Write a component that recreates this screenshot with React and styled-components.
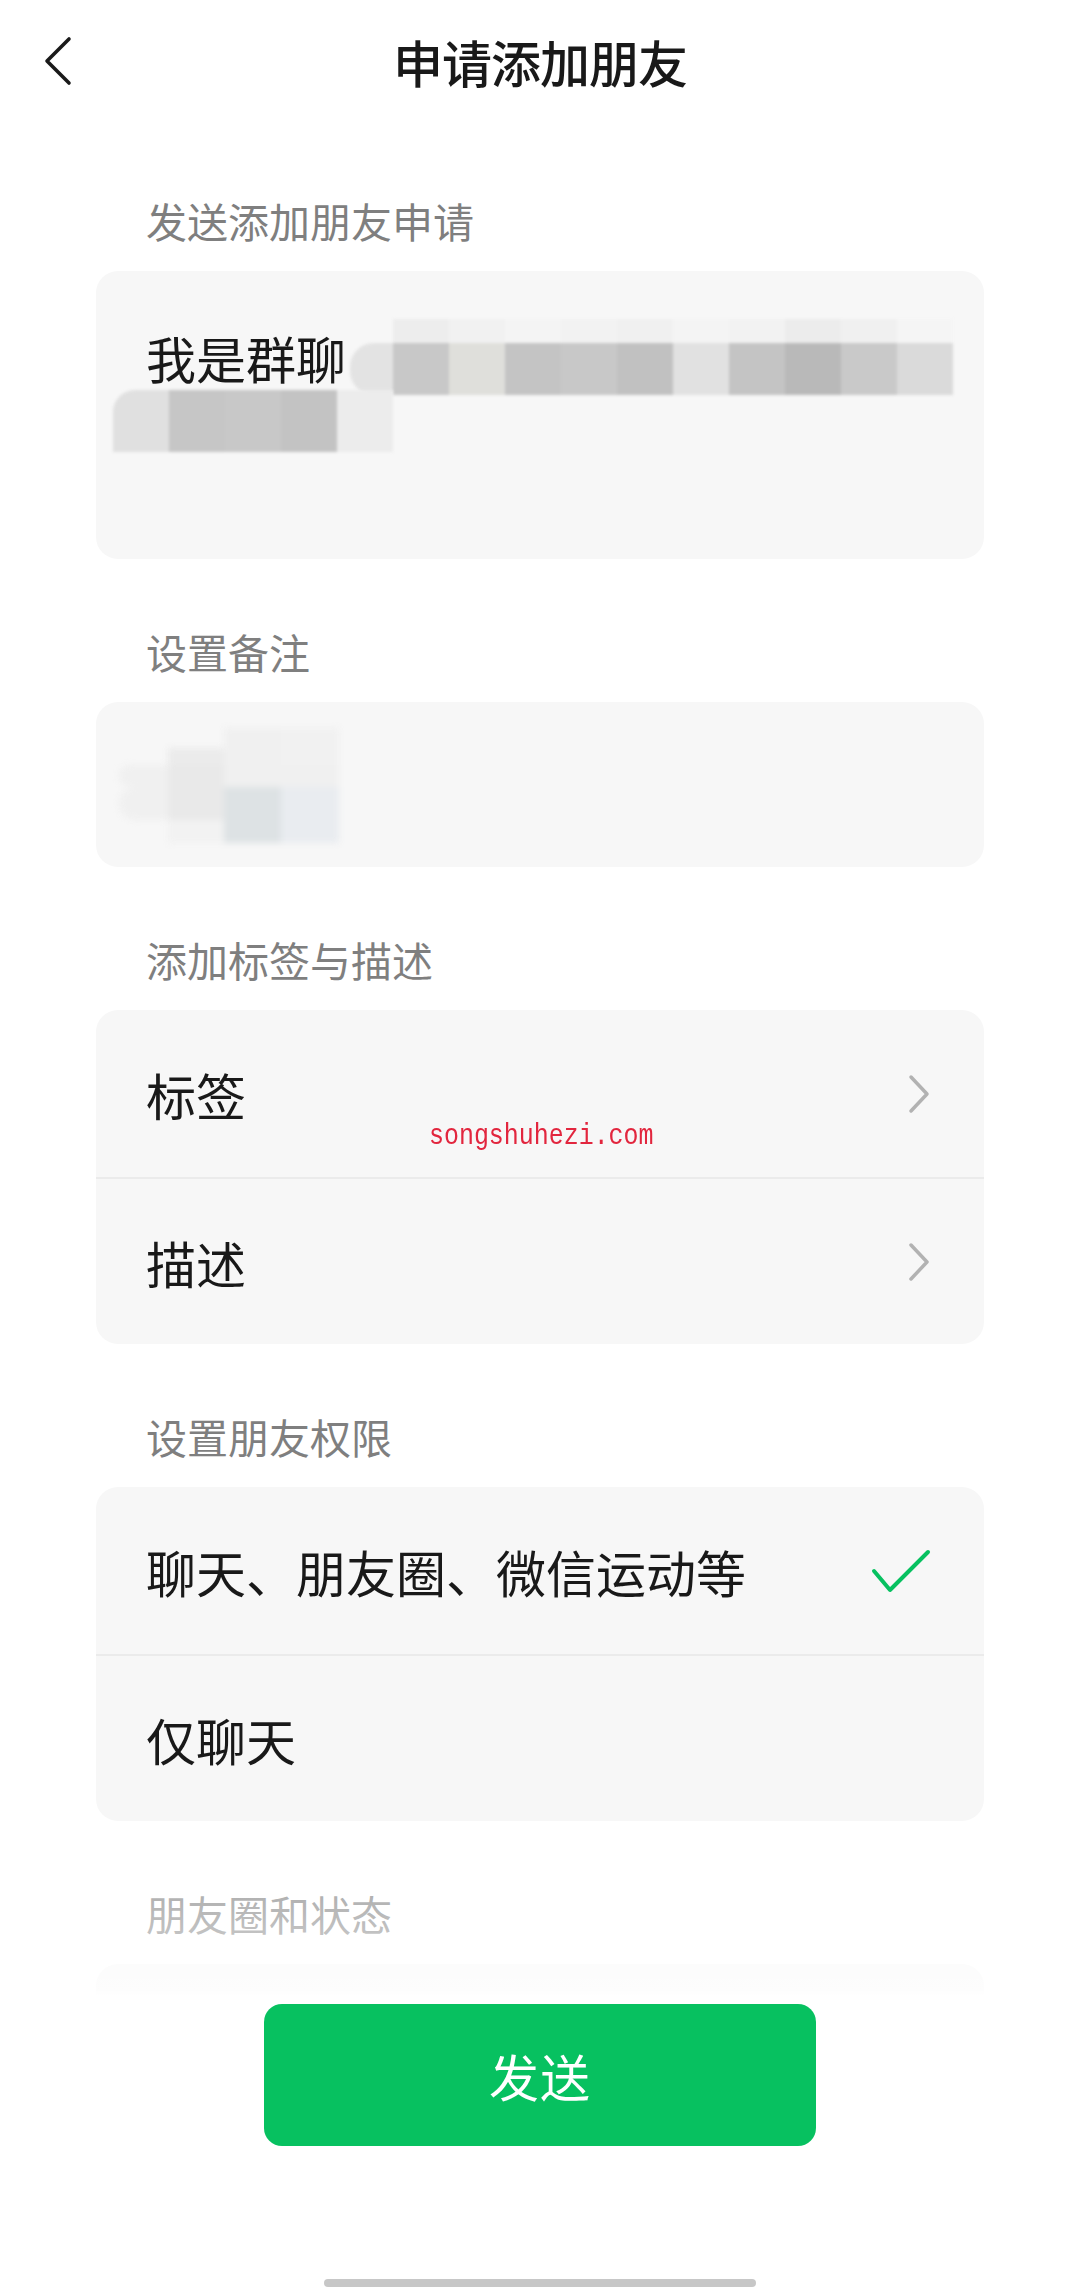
import React from 'react';
import styled, { createGlobalStyle } from 'styled-components';

const GlobalStyle = createGlobalStyle`
    body {
        margin: 0;
        background: #ffffff;
    }
    * {
        box-sizing: border-box;
    }
`;

const Page = styled.div`
    position: relative;
    width: 1080px;
    height: 2288px;
    overflow: hidden;
    background: #ffffff;
    font-family: "Noto Sans CJK SC", "Noto Sans", sans-serif;
    color: #191919;
`;

const Header = styled.div`
    height: 122px;
    display: grid;
    grid-template-columns: 1fr auto 1fr;
    align-items: center;
`;

const BackButton = styled.div`
    justify-self: start;
    padding-left: 42px;
    display: flex;
    align-items: center;
    svg {
        display: block;
    }
`;

const Title = styled.div`
    font-size: 50px;
    line-height: 60px;
    font-weight: 500;
    letter-spacing: -1px;
`;

const Content = styled.div`
    padding: 0 96px;
`;

const SectionLabel = styled.div`
    margin-top: ${props => (props.first ? '69px' : '63px')};
    margin-bottom: 22px;
    padding: 0 50px;
    font-size: 41px;
    line-height: 58px;
    color: #7f7f7f;
`;

const Card = styled.div`
    position: relative;
    background: #f7f7f7;
    border-radius: 22px;
    overflow: hidden;
`;

const MessageCard = styled(Card)`
    height: 288px;
    padding: 47px 0 0 50px;
`;

const RemarkCard = styled(Card)`
    height: 165px;
    padding: 26px 0 0 23px;
`;

const Line = styled.div`
    display: flex;
    align-items: center;
    height: 78px;
`;

const MessageText = styled.span`
    flex-shrink: 0;
    white-space: nowrap;
    font-size: 50px;
    line-height: 62px;
`;

const Mosaic = styled.div`
    flex-shrink: 0;
    display: grid;
    grid-template-columns: ${props => props.cols};
    filter: blur(${props => props.blur || 1.5}px);
    margin-left: ${props => props.offset || 0}px;
    margin-top: ${props => props.top || 0}px;
    width: max-content;
`;

const Cell = styled.div`
    height: ${props => props.h}px;
    background: ${props => props.c || 'transparent'};
    border-radius: ${props => props.round || 0};
`;

const Row = styled.div`
    height: 167px;
    display: flex;
    align-items: center;
    justify-content: space-between;
    padding: 0 ${props => props.right || 53}px 0 50px;
    font-size: 50px;
    line-height: 60px;
    & + & {
        border-top: 2px solid #ebebeb;
    }
    svg {
        display: block;
    }
`;

const Watermark = styled.div`
    position: absolute;
    left: 333px;
    top: 110px;
    font-family: "Liberation Mono", monospace;
    font-size: 29px;
    line-height: 34px;
    color: #e2263e;
    transform: scaleX(0.86);
    transform-origin: left center;
    white-space: nowrap;
`;

const FadedCard = styled(Card)`
    height: 200px;
`;

const BottomBar = styled.div`
    position: absolute;
    left: 0;
    right: 0;
    bottom: 0;
    height: 418px;
    display: flex;
    flex-direction: column;
    align-items: center;
    background: linear-gradient(
        to bottom,
        rgba(255, 255, 255, 0.3) 0px,
        rgba(255, 255, 255, 0.55) 70px,
        rgba(255, 255, 255, 0.72) 118px,
        #ffffff 126px,
        #ffffff 100%
    );
`;

const SendButton = styled.div`
    margin-top: 134px;
    width: 552px;
    height: 142px;
    border-radius: 18px;
    background: #07c160;
    color: #ffffff;
    font-size: 50px;
    line-height: 142px;
    text-align: center;
    letter-spacing: 1px;
`;

const HomeIndicator = styled.div`
    margin-top: auto;
    margin-bottom: 1px;
    width: 432px;
    height: 8px;
    border-radius: 4px;
    background: #c7c7c7;
`;

const msgTop = ['#f3f3f3', '#ededed', '#f1f1f1', '#f4f4f4', '#f2f2f2', '#f0f0f0', '#f4f4f4', '#f2f2f2', '#ececec', '#f0f0f0', '#f5f5f5'];
const msgMain = ['#e3e3e3', '#c8c8c8', '#dfdfdb', '#c4c4c4', '#c8c8c8', '#c1c1c1', '#e1e1e1', '#c4c4c4', '#b9b9b9', '#c9c9c9', '#dadada'];
const msgSecond = ['#e0e0e0', '#c6c6c6', '#c8c8c8', '#c3c3c3', '#ececec'];

const remarkRows = [
    { h: 20, cells: [null, null, '#f0f0f0', '#f1f1f1'] },
    { h: 17, cells: [null, '#ebebeb', '#f0f0f0', '#f1f1f1'] },
    { h: 22, cells: ['#f0f0f0', '#e9e9e9', '#f0f0f0', '#f0f0f0'] },
    { h: 33, cells: ['#f0f0f0', '#e9e9e9', '#dde2e4', '#e9ecf0'] },
    { h: 23, cells: [null, '#f2f2f2', '#dde2e4', '#e9ecf0'] },
];

const Chevron = () => (
    <svg width="24" height="42" viewBox="0 0 24 42">
        <polyline points="4,4 20,21 4,38" fill="none" stroke="#b2b2b2" strokeWidth="3.5" strokeLinecap="round" strokeLinejoin="round" />
    </svg>
);

const Check = () => (
    <svg width="62" height="46" viewBox="0 0 62 46">
        <polyline points="4,23 20,42 58,4" fill="none" stroke="#07c160" strokeWidth="4" strokeLinecap="round" strokeLinejoin="round" />
    </svg>
);

const Back = () => (
    <svg width="32" height="52" viewBox="0 0 32 52">
        <polyline points="27,4 5,26 27,48" fill="none" stroke="#1a1a1a" strokeWidth="3.6" strokeLinecap="round" strokeLinejoin="round" />
    </svg>
);

export default () => {
    return (
        <Page>
            <GlobalStyle />
            <Header>
                <BackButton><Back /></BackButton>
                <Title>申请添加朋友</Title>
                <div />
            </Header>
            <Content>
                <SectionLabel first>发送添加朋友申请</SectionLabel>
                <MessageCard>
                    <Line>
                        <MessageText>我是群聊</MessageText>
                        <Mosaic cols={`43px repeat(10, 56px)`} offset={4}>
                            {msgTop.map((c, i) => <Cell key={'t' + i} h={24} c={i === 0 ? null : c} />)}
                            {msgMain.map((c, i) => <Cell key={'m' + i} h={52} c={c} round={i === 0 ? '24px 0 0 24px' : 0} />)}
                        </Mosaic>
                    </Line>
                    <Mosaic cols={`repeat(5, 56px)`} offset={-33} top={-6}>
                        {msgSecond.map((c, i) => <Cell key={i} h={62} c={c} round={i === 0 ? '22px 0 0 0' : 0} />)}
                    </Mosaic>
                </MessageCard>

                <SectionLabel>设置备注</SectionLabel>
                <RemarkCard>
                    <Mosaic cols="49px 56px 57px 58px" blur={3}>
                        {remarkRows.map((r, ri) => r.cells.map((c, ci) => (
                            <Cell key={ri + '-' + ci} h={r.h} c={c} round={ci === 0 ? '18px 0 0 18px' : 0} />
                        )))}
                    </Mosaic>
                </RemarkCard>

                <SectionLabel>添加标签与描述</SectionLabel>
                <Card>
                    <Row>
                        <span>标签</span>
                        <Chevron />
                    </Row>
                    <Row>
                        <span>描述</span>
                        <Chevron />
                    </Row>
                    <Watermark>songshuhezi.com</Watermark>
                </Card>

                <SectionLabel>设置朋友权限</SectionLabel>
                <Card>
                    <Row right={52}>
                        <span>聊天、朋友圈、微信运动等</span>
                        <Check />
                    </Row>
                    <Row>
                        <span>仅聊天</span>
                    </Row>
                </Card>

                <SectionLabel>朋友圈和状态</SectionLabel>
                <FadedCard />
            </Content>
            <BottomBar>
                <SendButton>发送</SendButton>
                <HomeIndicator />
            </BottomBar>
        </Page>
    );
};
